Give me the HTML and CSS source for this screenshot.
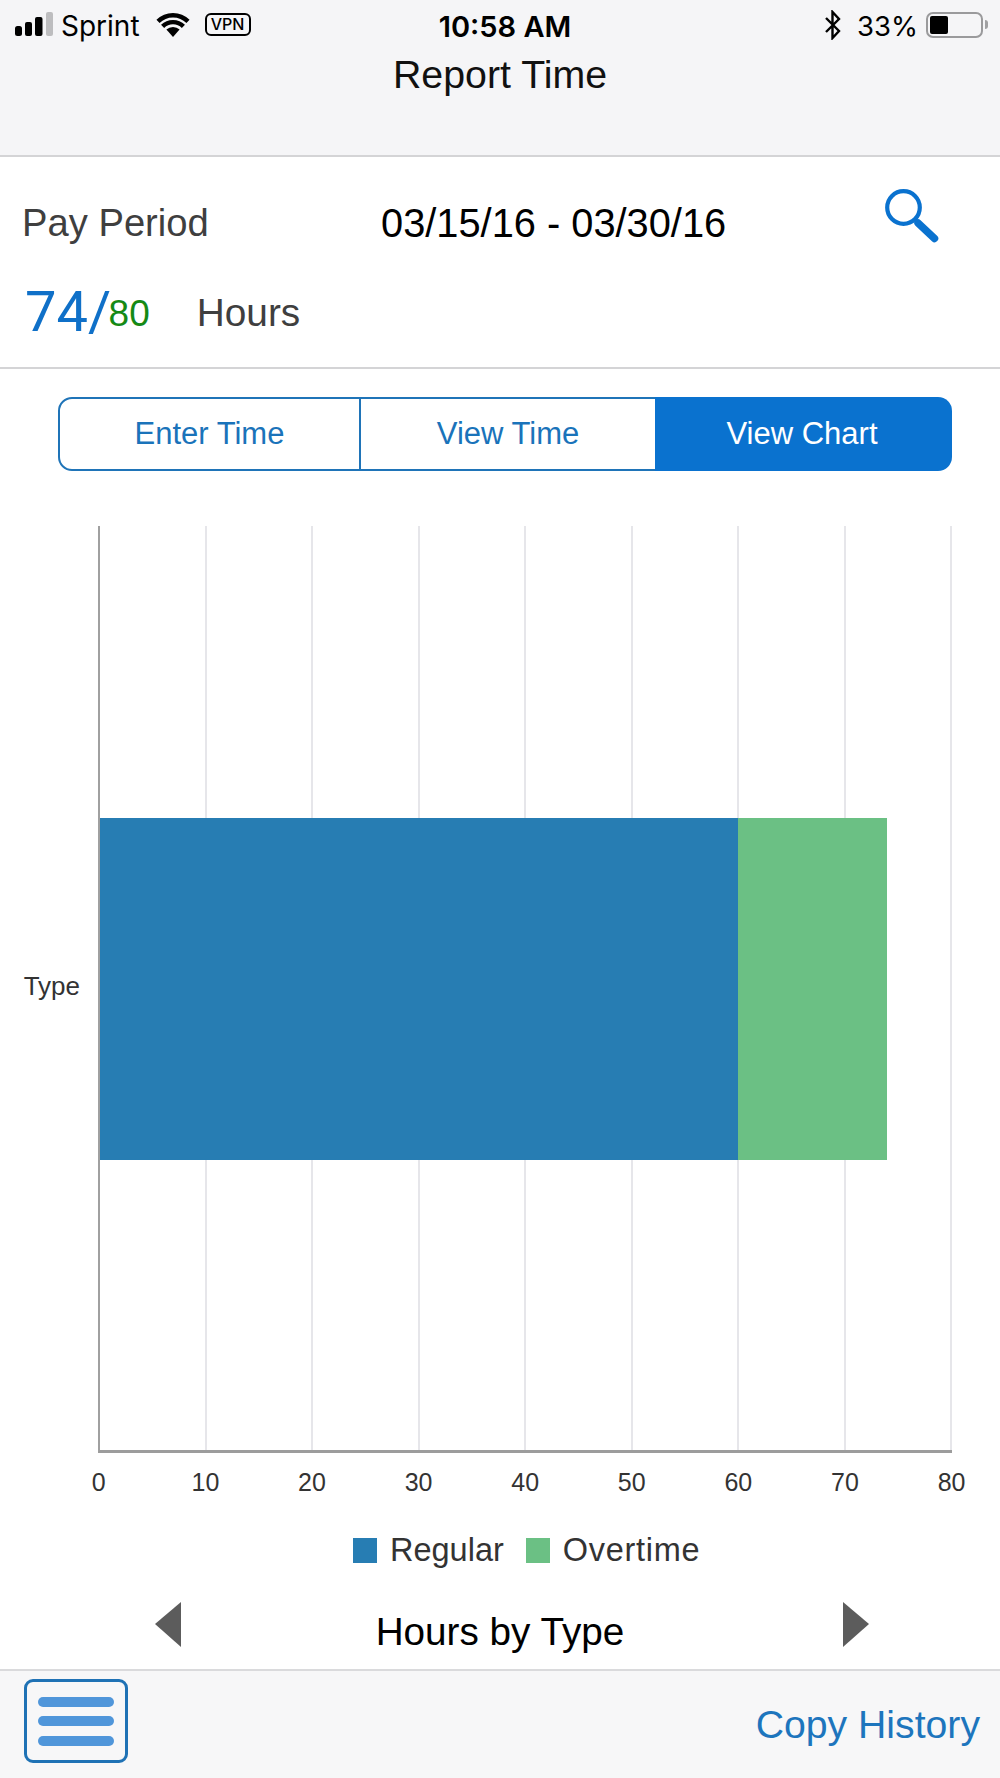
FILE: index.html
```html
<!DOCTYPE html>
<html lang="en">
<head>
<meta charset="utf-8">
<title>Report Time</title>
<link rel="stylesheet" href="styles.css">
</head>
<body>
<div class="page">
  <header class="top">
    <div class="status">
      <div class="status-left">
        <svg class="signal" width="40" height="26" viewBox="0 0 40 26">
          <rect x="0" y="14" width="7" height="10" rx="2.5" fill="#000"/>
          <rect x="10" y="10" width="7" height="14" rx="2" fill="#000"/>
          <rect x="20" y="5" width="7.5" height="19" rx="2" fill="#000"/>
          <rect x="31" y="0" width="7" height="24" rx="2" fill="#bdbdbf"/>
        </svg>
        <span class="carrier">Sprint</span>
        <svg class="wifi" width="34" height="25" viewBox="0 0 34 25">
          <path d="M17 25 L10.4 17.6 A9.4 9.4 0 0 1 23.6 17.6 Z" fill="#000"/>
          <path d="M6.6 14.4 A14.7 14.7 0 0 1 27.4 14.4" fill="none" stroke="#000" stroke-width="4.4"/>
          <path d="M2 9.4 A21.2 21.2 0 0 1 32 9.4" fill="none" stroke="#000" stroke-width="4.4"/>
        </svg>
        <span class="vpn">VPN</span>
      </div>
      <div class="clock">10:58 AM</div>
      <div class="status-right">
        <svg class="bt" width="18" height="30" viewBox="0 0 18 30">
          <path d="M2 8 L15 21 L8.5 28 V2 L15 9 L2 22" fill="none" stroke="#000" stroke-width="2.4"/>
        </svg>
        <span class="pct">33%</span>
        <span class="battery"><span class="battery-fill"></span></span>
        <span class="battery-cap"></span>
      </div>
    </div>
    <h1 class="title">Report Time</h1>
  </header>

  <section class="summary">
    <div class="period-row">
      <span class="period-label">Pay Period</span>
      <span class="period-dates">03/15/16 - 03/30/16</span>
      <svg class="search" width="54" height="56" viewBox="0 0 54 56">
        <circle cx="18.5" cy="18.5" r="16.3" fill="none" stroke="#0a72cf" stroke-width="4.2"/>
        <path d="M33 34 L49.5 49.5" fill="none" stroke="#0a72cf" stroke-width="7.5" stroke-linecap="round"/>
      </svg>
    </div>
    <div class="hours-row">
      <span class="worked">74/</span><span class="target">80</span><span class="hours-label">Hours</span>
    </div>
  </section>

  <nav class="tabs">
    <a class="tab tab-first">Enter Time</a>
    <a class="tab tab-mid">View Time</a>
    <a class="tab tab-active">View Chart</a>
  </nav>

  <section class="chart">
    <div class="chart-main">
      <div class="y-label">Type</div>
      <div class="plot">
        <div class="cell"></div><div class="cell"></div><div class="cell"></div><div class="cell"></div>
        <div class="cell"></div><div class="cell"></div><div class="cell"></div><div class="cell"></div>
        <div class="bar">
          <div class="seg seg-regular" style="width:75%"></div>
          <div class="seg seg-overtime" style="width:17.5%"></div>
        </div>
      </div>
    </div>
    <div class="ticks">
      <span>0</span><span>10</span><span>20</span><span>30</span><span>40</span><span>50</span><span>60</span><span>70</span><span>80</span>
    </div>
    <div class="legend">
      <span class="swatch swatch-regular"></span><span class="legend-text">Regular</span>
      <span class="swatch swatch-overtime"></span><span class="legend-text legend-wide">Overtime</span>
    </div>
  </section>

  <div class="pager">
    <svg class="arrow arrow-left" width="26" height="45" viewBox="0 0 26 45"><path d="M26 0 V45 L0 22 Z" fill="#5c5c5c"/></svg>
    <div class="pager-title">Hours by Type</div>
    <svg class="arrow arrow-right" width="26" height="45" viewBox="0 0 26 45"><path d="M0 0 V45 L26 22 Z" fill="#5c5c5c"/></svg>
  </div>

  <footer class="foot">
    <div class="menu"><span class="menu-bar"></span><span class="menu-bar"></span><span class="menu-bar"></span></div>
    <a class="copy">Copy History</a>
  </footer>
</div>
</body>
</html>
```

FILE: styles.css
```css
* { box-sizing: border-box; }
html, body { margin: 0; padding: 0; background: #fff; }
.page {
  width: 1000px;
  height: 1778px;
  overflow: hidden;
  font-family: "Liberation Sans", Arial, sans-serif;
  color: #000;
  display: flex;
  flex-direction: column;
}

/* Header */
.top {
  height: 157px;
  background: #f5f5f7;
  border-bottom: 2px solid #d4d4d6;
}
.status {
  height: 52px;
  display: grid;
  grid-template-columns: 1fr auto 1fr;
  align-items: center;
  font-family: Inter, "Liberation Sans", sans-serif;
}
.status-left { display: flex; align-items: center; padding-left: 15px; }
.signal { flex: none; margin-top: -2px; }
.carrier { font-size: 28px; margin-left: 6px; }
.wifi { margin-left: 16px; margin-top: -3px; }
.vpn {
  margin-left: 15px;
  margin-top: -3px;
  width: 46px;
  height: 23px;
  border: 2px solid #000;
  border-radius: 6px;
  font-size: 16px;
  font-weight: 500;
  line-height: 19px;
  text-align: center;
}
.clock { font-size: 29px; font-weight: 600; padding-left: 10px; }
.status-right { display: flex; align-items: center; justify-content: flex-end; padding-right: 12px; }
.bt { margin-top: -3px; }
.pct { font-size: 27.5px; margin-left: 15px; }
.battery {
  margin-left: 8px;
  margin-top: -3px;
  width: 57px;
  height: 26px;
  border: 2.5px solid #9a9a9c;
  border-radius: 7px;
  padding: 2px;
  display: flex;
}
.battery-fill { width: 18px; background: #000; border-radius: 2px; }
.battery-cap { width: 3px; height: 9px; margin-left: 2px; margin-top: -3px; background: #a0a0a2; border-radius: 0 3px 3px 0; }
.title {
  margin: 0;
  font-size: 39.3px;
  font-weight: 400;
  line-height: 44px;
  text-align: center;
  color: #111;
}

/* Summary */
.summary {
  height: 212px;
  padding: 44px 0 0 22px;
  border-bottom: 2px solid #d4d4d6;
}
.period-row { display: flex; height: 44px; font-size: 38.2px; line-height: 44px; }
.period-label { width: 359px; color: #3f3f3f; }
.period-dates { font-size: 39.8px; color: #000; }
.search { margin-left: 159px; margin-top: -12px; flex: none; }
.hours-row { display: flex; align-items: baseline; margin-top: 40px; line-height: 44px; }
.worked {
  font-family: Roboto, "Liberation Sans", sans-serif;
  font-weight: 400;
  font-size: 56px;
  line-height: 44px;
  color: #0f70c8;
  margin-left: 3px;
  margin-right: -2.5px;
  transform: translateY(5px);
}
.target { font-size: 37px; color: #158a15; }
.hours-label { font-size: 38.8px; color: #3f3f3f; margin-left: 47px; }

/* Tabs */
.tabs {
  display: grid;
  grid-template-columns: 303px 294px 297px;
  width: 894px;
  height: 74px;
  margin: 28px 0 0 58px;
}
.tab {
  display: flex;
  align-items: center;
  justify-content: center;
  font-size: 31px;
  color: #1a73ba;
  border: 2px solid #1f74b8;
  border-left: 0;
}
.tab-first { border-left: 2px solid #1f74b8; border-radius: 14px 0 0 14px; }
.tab-mid { border-right: 0; }
.tab-active { background: #0a72cf; border: 0; border-radius: 0 14px 14px 0; color: #fff; padding-right: 3px; }

/* Chart */
.chart { margin-top: 55px; }
.chart-main { display: flex; align-items: center; }
.y-label { width: 98px; padding: 0 18px 6px 0; text-align: right; font-size: 26px; color: #333; }
.plot {
  position: relative;
  width: 854px;
  height: 927px;
  display: grid;
  grid-template-columns: repeat(8, 1fr);
  border-left: 2px solid #a0a0a0;
  border-bottom: 3px solid #9c9c9c;
}
.cell { border-right: 2px solid #e6e6ea; }
.bar {
  position: absolute;
  left: 0;
  right: 1px;
  top: 292px;
  height: 342px;
  display: flex;
}
.seg-regular { background: #277db3; }
.seg-overtime { background: #6bc084; }
.ticks {
  display: grid;
  grid-template-columns: repeat(9, 106.6px);
  margin: 15px 0 0 45.5px;
  font-size: 25px;
  line-height: 29px;
  color: #333;
  text-align: center;
}
.legend {
  display: flex;
  align-items: center;
  height: 36px;
  margin: 35px 0 0 353px;
  font-size: 32.5px;
  color: #333;
}
.swatch { width: 24px; height: 25px; flex: none; }
.swatch-regular { background: #277db3; }
.swatch-overtime { background: #6bc084; margin-left: 22px; }
.legend-text { margin-left: 13px; }
.legend-wide { letter-spacing: 0.7px; }

/* Pager */
.pager {
  display: grid;
  grid-template-columns: 1fr auto 1fr;
  height: 44px;
  margin-top: 42px;
}
.arrow { margin-top: -8px; }
.arrow-left { margin-left: 155px; justify-self: start; }
.arrow-right { margin-right: 131px; justify-self: end; }
.pager-title { font-size: 38.7px; line-height: 44px; }

/* Footer */
.foot {
  flex: 1;
  margin-top: 15px;
  display: flex;
  align-items: center;
  justify-content: space-between;
  padding: 0 20px 0 24px;
  background: #f7f7f8;
  border-top: 2px solid #dadadc;
}
.menu {
  align-self: flex-start;
  margin-top: 8px;
  width: 104px;
  height: 84px;
  border: 3px solid #1f72b5;
  border-radius: 9px;
  display: flex;
  flex-direction: column;
  justify-content: center;
  gap: 9.5px;
  padding: 0 11px;
}
.menu-bar { height: 10px; background: #5096da; border-radius: 5px; }
.copy { font-size: 39.2px; line-height: 45px; color: #1d75bd; }
```
